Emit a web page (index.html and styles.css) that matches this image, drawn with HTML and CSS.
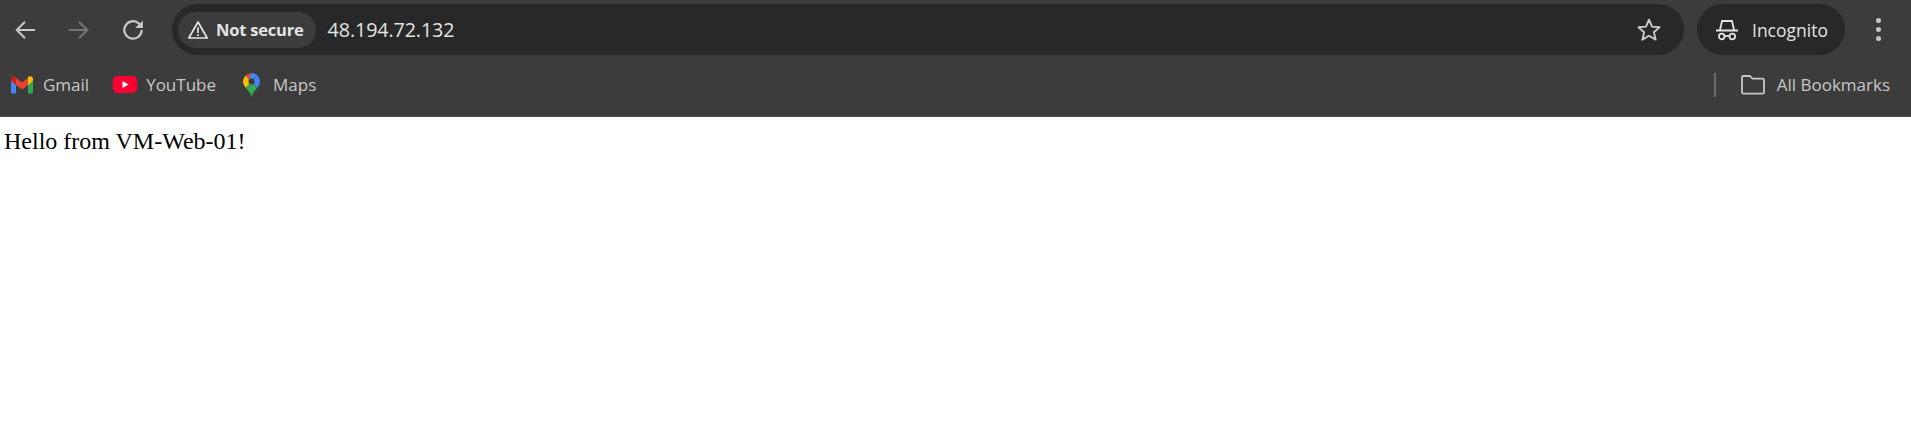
FILE: index.html
```html
<!DOCTYPE html>
<html lang="en">
<head>
  <meta charset="UTF-8">
  <title>48.194.72.132</title>
  <link rel="stylesheet" href="styles.css">
</head>
<body>

<!-- Toolbar -->
<div class="toolbar">
  <div class="nav-btn">
    <svg width="22" height="22" viewBox="0 0 24 24" fill="none" stroke="#c7c7c7" stroke-width="2.200"><path d="M23 12H3M12 3l-9 9 9 9"/></svg>
  </div>
  <div class="nav-btn">
    <svg width="22" height="22" viewBox="0 0 24 24" fill="none" stroke="#757575" stroke-width="2.200"><path d="M1 12h20M12 3l9 9-9 9"/></svg>
  </div>
  <div class="nav-btn">
    <svg width="22" height="22" viewBox="0 0 24 24" fill="none" stroke="#c7c7c7" stroke-width="2.400"><path d="M21.500 12a9.500 9.500 0 1 1-3-7l3 2.800"/><path d="M22.800 1.500v8.300h-8.300z" fill="#c7c7c7" stroke="none"/></svg>
  </div>

  <div class="omnibox">
    <div class="security-chip">
      <svg width="22" height="20" viewBox="0 0 22 20" fill="none" stroke="#e3e3e3" stroke-width="1.700"><path d="M11 2 1.800 18h18.400z" stroke-linejoin="round"/><path d="M11 7.500v5.500M11 14.200v1.800"/></svg>
      <span>Not secure</span>
    </div>
    <span class="url">48.194.72.132</span>
    <svg class="star" width="26" height="26" viewBox="0 0 24 24" fill="none" stroke="#c7c7c7" stroke-width="1.800"><path d="M12 2.500l2.800 6.400 6.900.6-5.200 4.600 1.600 6.800-6.100-3.600-6.100 3.600 1.600-6.800-5.200-4.600 6.900-.6z" stroke-linejoin="round"/></svg>
  </div>

  <div class="incognito">
    <svg width="24" height="24" viewBox="0 0 24 24" fill="none" stroke="#e3e3e3" stroke-width="1.800"><path d="M1 12.500h22M5 12l2-9h10l2 9"/><circle cx="6.700" cy="18.500" r="2.800"/><circle cx="17.300" cy="18.500" r="2.800"/><path d="M9.500 18h5"/></svg>
    <span>Incognito</span>
  </div>

  <div class="kebab"><i></i><i></i><i></i></div>
</div>

<!-- Bookmarks bar -->
<div class="bookmarks">
  <div class="mark mark-gmail">
    <svg width="22" height="18" viewBox="0 0 22 18"><path d="M0 3v13c0 .8.600 1.500 1.500 1.500H5V8z" fill="#4285f4"/><path d="M17 8v9.500h3.500c.9 0 1.500-.7 1.500-1.500V3z" fill="#34a853"/><path d="M5 9V2l6 4.600L17 2v7l-6 4.600z" fill="#ea4335"/><path d="M0 3c0-2.500 2.800-3.700 4.700-2.200L5 1v8L0 5z" fill="#c5221f"/><path d="M17 1l.3-.2C19.200-.7 22 .5 22 3v2l-5 4z" fill="#fbbc04"/></svg>
    <span>Gmail</span>
  </div>
  <div class="mark mark-youtube">
    <svg width="24" height="17" viewBox="0 0 24 17"><rect width="24" height="17" rx="4.500" fill="#ff0033"/><path d="M9.500 5v7l6-3.500z" fill="#fff"/></svg>
    <span>YouTube</span>
  </div>
  <div class="mark mark-maps">
    <svg width="17" height="24" viewBox="0 0 17 24"><path d="M2.500 14.500C5 17.500 7.500 20 8.500 24c1-4 3.500-6.500 6-9.500l-6-5z" fill="#34a853"/><path d="M2.500 2.500A8.500 8.500 0 0 0 0 8.500c0 2.200 1.200 4.200 2.500 6l6-5.500z" fill="#fbbc04"/><path d="M8.500 0a8.500 8.500 0 0 0-6 2.500L6 6l2.500-1z" fill="#ea4335"/><path d="M8.500 0c2.400 0 4.500 1 6 2.500L11 6 6 6z" fill="#4285f4"/><path d="M14.500 2.500a8.500 8.500 0 0 1 2.500 6c0 2.200-1.200 4.200-2.500 6L8.500 9z" fill="#4285f4"/><path d="M0 8.500 8.500 8.500 2.500 14.500z" fill="#fbbc04"/><circle cx="8.500" cy="8.500" r="3" fill="#3c3c3c"/></svg>
    <span>Maps</span>
  </div>

  <div class="all-marks">
    <div class="bar-sep"></div>
    <svg width="24" height="20" viewBox="0 0 24 20" fill="none" stroke="#c7c7c7" stroke-width="1.800"><path d="M1 2.500c0-.8.600-1.500 1.500-1.500h6.500l2.500 2.700h10c.9 0 1.500.6 1.500 1.500v12c0 .8-.6 1.500-1.500 1.500h-19c-.9 0-1.500-.7-1.500-1.500z" stroke-linejoin="round"/></svg>
    <span>All Bookmarks</span>
  </div>
</div>

<!-- Page content -->
<p class="hello">Hello from VM-Web-01!</p>

</body>
</html>
```

FILE: styles.css
```css
body {
  margin: 0;
  padding: 0;
  background: #fff;
  font-family: "Open Sans", "Noto Sans", sans-serif;
}

/* Toolbar */
.toolbar {
  display: flex;
  align-items: center;
  gap: 4px;
  height: 60px;
  padding: 0 4px 1px 0;
  box-sizing: border-box;
  background: #3c3c3c;
}

.nav-btn {
  display: flex;
  align-items: center;
  justify-content: center;
  width: 50px;
  height: 50px;
  flex: none;
}

.omnibox {
  display: flex;
  align-items: center;
  flex: 1;
  height: 51px;
  margin-left: 10px;
  padding: 0 6px;
  border-radius: 26px;
  background: #282828;
  color: #e3e3e3;
}

.security-chip {
  display: flex;
  align-items: center;
  gap: 7px;
  height: 36px;
  padding: 0 12px 0 9px;
  border-radius: 18px;
  background: #3c3c3c;
  font-size: 16.500px;
  font-weight: 700;
  letter-spacing: -0.2px;
}

.url {
  margin-left: 12px;
  font-size: 19.700px;
  letter-spacing: -0.1px;
}

.star {
  margin-left: auto;
  margin-right: 16px;
}

.incognito {
  display: flex;
  align-items: center;
  gap: 13px;
  width: 148px;
  height: 51px;
  margin-left: 9px;
  padding-left: 18px;
  box-sizing: border-box;
  flex: none;
  border-radius: 26px;
  background: #282828;
  color: #e3e3e3;
  font-size: 17.500px;
}

.kebab {
  display: flex;
  flex-direction: column;
  align-items: center;
  gap: 4px;
  width: 58px;
  flex: none;
}

.kebab i {
  width: 5px;
  height: 5px;
  border-radius: 50%;
  background: #c7c7c7;
}

/* Bookmarks bar */
.bookmarks {
  display: flex;
  align-items: center;
  height: 57px;
  padding: 0 21px 7px 11px;
  box-sizing: border-box;
  background: #3c3c3c;
  border-bottom: 1px solid #4a4a4a;
  color: #c7c7c7;
  font-size: 17px;
}

.mark {
  display: flex;
  align-items: center;
}

.mark-gmail { gap: 10px; }
.mark-youtube { gap: 9px; margin-left: 24px; }
.mark-maps { gap: 13px; margin-left: 27px; }

.all-marks {
  display: flex;
  align-items: center;
  margin-left: auto;
}

.bar-sep {
  width: 2px;
  height: 24px;
  margin-right: 25px;
  background: #6a6a6a;
}

.all-marks span {
  margin-left: 12px;
}

/* Page content */
.hello {
  margin: 0;
  padding: 11px 0 0 4px;
  color: #000;
  font-family: "Liberation Serif", serif;
  font-size: 24px;
}
```
